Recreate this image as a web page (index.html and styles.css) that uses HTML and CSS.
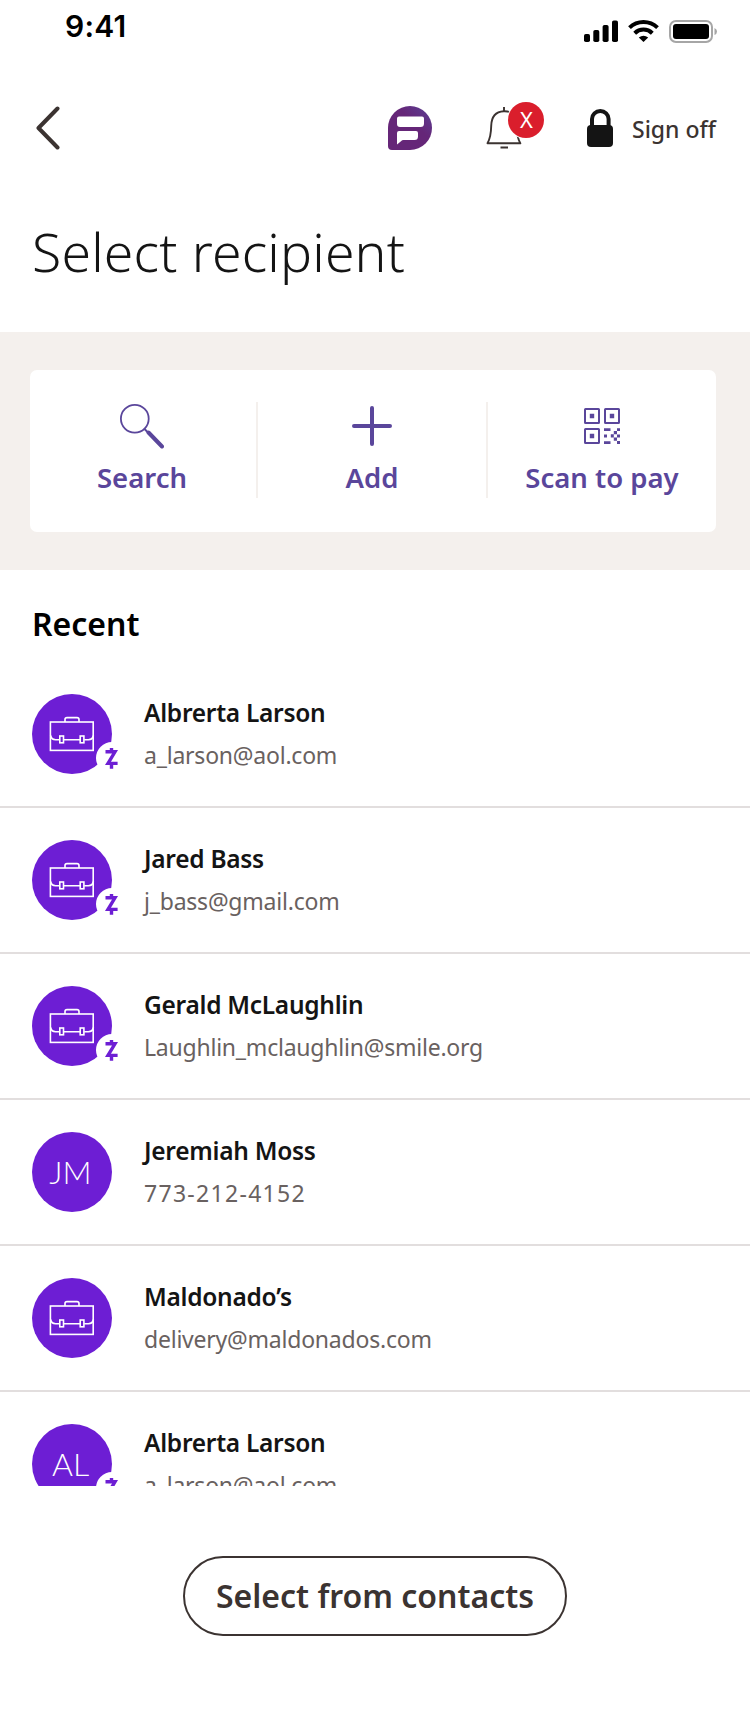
FILE: index.html
```
<!DOCTYPE html>
<html lang="en">
<head>
    <meta charset="UTF-8">
    <meta name="viewport" content="width=device-width, initial-scale=1.0">
    <title>Select recipient</title>
    <link rel="stylesheet" href="styles.css">
</head>
<body>
<!-- shared icons -->
<svg class="defs" width="0" height="0">
    <symbol id="briefcase" viewBox="0 0 80 80">
        <g fill="none" stroke="#fff" stroke-width="1.6">
            <rect x="18.4" y="28" width="42.8" height="28.4"/>
            <path d="M33 28v-2.400q0-2 2-2h10q2 0 2 2v2.400"/>
            <path d="M18.600 41.500q.8 4.200 5 4.200h4M31.500 45.700h16.600M52.200 45.700h4.200q4.200 0 5-4.200"/>
            <rect x="27.800" y="42" width="3.700" height="6.800"/>
            <rect x="48.200" y="42" width="3.700" height="6.800"/>
        </g>
    </symbol>
    <symbol id="zelle" viewBox="0 0 32 32">
        <circle cx="16.500" cy="16" r="16" fill="#fff"/>
        <path d="M16 6v4M16 22v4.700M10 9.800h9.500l-7 11.600h9.600" fill="none" stroke="#6d1ed4" stroke-width="3.400"/>
    </symbol>
</svg>

<div class="status">
    <span class="time">9:41</span>
    <div class="status-icons">
        <svg width="34" height="23"><rect x="0" y="14" width="6" height="8" rx="1.8"/><rect x="9.300" y="10" width="6" height="12" rx="1.800"/><rect x="18.600" y="5" width="6" height="17" rx="1.800"/><rect x="28" y="0.500" width="6" height="21.500" rx="1.800"/></svg>
        <svg width="31" height="23" fill="none" stroke="#000" stroke-width="4"><path d="M1.500 7.600a20.500 20.500 0 0 1 28 0"/><path d="M6.700 13.200a12.600 12.600 0 0 1 17.600 0"/><path d="M15.500 22l-4.700-4.500q4.700-3.300 9.400 0z" fill="#000" stroke="none"/></svg>
        <svg width="48" height="23"><rect x="1" y="1" width="42" height="21" rx="6" fill="none" stroke="#a6a6a6" stroke-width="2"/><rect x="4" y="4" width="36" height="15" rx="3"/><path d="M45.500 8q2.500 1 2.500 3.500t-2.500 3.500z" fill="#a6a6a6"/></svg>
    </div>
</div>

<div class="header">
    <svg class="back" width="24" height="44" fill="none" stroke="#3b3331" stroke-width="4" stroke-linecap="round" stroke-linejoin="round"><path d="M21.500 2.500 2.500 22 21.500 41.500"/></svg>
    <svg class="logo" width="44" height="44">
        <defs><linearGradient id="lg" x1="0" y1="1" x2="1" y2="0"><stop offset=".6" stop-color="#652678"/><stop offset="1" stop-color="#5a4196"/></linearGradient></defs>
        <path d="M0 22A22 22 0 1 1 22 44H4Q0 44 0 40z" fill="url(#lg)"/>
        <path d="M11 10.500H34Q36 10.500 36 12.500V17.500q0 3.500-3.500 3.500H12q-3 0-3-3v-5.500q0-2 2-2zM11 25H28q2 0 2 2v3.500q0 3.500-3.500 3.500h-11q-1.500 0-2.500 1.200L9 38.500V27q0-2 2-2z" fill="#fff"/>
    </svg>
    <svg class="bell" width="58" height="52">
        <g fill="none" stroke="#3b3331" stroke-width="1.900"><path d="M1.500 41.300Q5 35 5.200 24C5.400 14 10 9.600 17.800 9.200S30.400 14 30.600 24Q30.800 35 34.300 41.300z" stroke-linejoin="round"/><path d="M18 5v5M14.500 45.500h7.500"/></g>
        <circle cx="40" cy="18" r="19" fill="#fff"/>
        <circle cx="40" cy="18" r="18" fill="#da1e2c"/>
        <text x="40.500" y="26" text-anchor="middle">X</text>
    </svg>
    <svg class="lock" width="26" height="38"><path d="M5 18V10a8.300 8 0 0 1 16.600 0v8" fill="none" stroke="#141414" stroke-width="4"/><rect y="16" width="26" height="22" rx="4" fill="#141414"/></svg>
    <span class="signoff">Sign off</span>
</div>

<h1>Select recipient</h1>

<div class="band">
    <div class="card">
        <div class="action">
            <svg width="44" height="46" fill="none" stroke="#5a469b"><circle cx="14.800" cy="14.800" r="13.900" stroke-width="1.800"/><path d="M24 24.500l5 5" stroke-width="2"/><path d="M28.500 28.500 42 42.500" stroke-width="4" stroke-linecap="round"/></svg>
            <span>Search</span>
        </div>
        <div class="action add">
            <svg width="44" height="46" stroke="#5a469b" stroke-width="4" stroke-linecap="round"><path d="M4 22H40M22 4V40"/></svg>
            <span>Add</span>
        </div>
        <div class="action">
            <svg width="36" height="46" fill="none" stroke="#5a469b" stroke-width="2">
                <rect x="1" y="5" width="14" height="14" rx=".5"/><rect x="21" y="5" width="14" height="14" rx=".5"/><rect x="1" y="25" width="14" height="14" rx=".5"/>
                <path d="M5.800 9.800h4.400v4.400H5.800zM25.800 9.800h4.400v4.400h-4.400zM5.800 29.800h4.400v4.400H5.800zM20 24.200h6.500v2.800H20zM33 24.200h3V27h-3zM29.800 27H33v3.300h-3.200zM20 30.600h3v2.800h-3zM26.800 30.300h3v3.200h-3zM33 30.600h3v2.800h-3zM29.800 33.500H33v3.300h-3.200zM20 37.200h6.500V40H20zM33 37h3v3h-3z" fill="#5a469b" stroke="none"/>
            </svg>
            <span>Scan to pay</span>
        </div>
    </div>
</div>

<h2>Recent</h2>
<div class="list">
    <div class="row">
        <div class="avatar"><svg width="80" height="80"><use href="#briefcase"/></svg><svg class="badge"><use href="#zelle"/></svg></div>
        <div class="who"><div class="name">Albrerta Larson</div><div class="contact">a_larson@aol.com</div></div>
    </div>
    <div class="row">
        <div class="avatar"><svg width="80" height="80"><use href="#briefcase"/></svg><svg class="badge"><use href="#zelle"/></svg></div>
        <div class="who"><div class="name">Jared Bass</div><div class="contact">j_bass@gmail.com</div></div>
    </div>
    <div class="row">
        <div class="avatar"><svg width="80" height="80"><use href="#briefcase"/></svg><svg class="badge"><use href="#zelle"/></svg></div>
        <div class="who"><div class="name">Gerald McLaughlin</div><div class="contact">Laughlin_mclaughlin@smile.org</div></div>
    </div>
    <div class="row">
        <div class="avatar">JM</div>
        <div class="who"><div class="name">Jeremiah Moss</div><div class="contact phone">773-212-4152</div></div>
    </div>
    <div class="row">
        <div class="avatar"><svg width="80" height="80"><use href="#briefcase"/></svg></div>
        <div class="who"><div class="name">Maldonado’s</div><div class="contact">delivery@maldonados.com</div></div>
    </div>
    <div class="row">
        <div class="avatar">AL<svg class="badge"><use href="#zelle"/></svg></div>
        <div class="who"><div class="name">Albrerta Larson</div><div class="contact">a_larson@aol.com</div></div>
    </div>
</div>

<button class="contacts">Select from contacts</button>
</body>
</html>
```
FILE: styles.css
```
*{box-sizing:border-box;}
body{margin:0;background:#fff;color:#141414;font-family:"Noto Sans",sans-serif;}
svg{display:block;flex:none;}
h1,h2{margin:0;}
.defs{position:absolute;}

.status{display:flex;justify-content:space-between;height:86px;padding:0 33px 0 65px;}
.time{font:600 30px/52px Inter,sans-serif;color:#000;letter-spacing:.2px;}
.status-icons{display:flex;gap:10px;padding-top:20px;}

.header{display:flex;align-items:center;height:84px;padding-left:36px;}
.logo{margin-left:328px;}
.bell{margin-left:54px;}
.bell text{font:400 22px "Noto Sans",sans-serif;fill:#fff;}
.lock{margin-left:43px;}
.signoff{margin-left:19px;padding-top:2px;font-size:23px;font-weight:550;color:#3b3331;white-space:nowrap;}

h1{padding:42px 32px 40px;font-size:53.5px;line-height:80px;font-weight:300;letter-spacing:.2px;}

.band{padding:38px 34px 38px 30px;background:#f4f0ed;}
.card{display:grid;grid-template-columns:228px 230px 228px;height:162px;padding:32px 0 34px;background:#fff;border-radius:7px;}
.action{display:flex;flex-direction:column;align-items:center;padding:2px 2px 0 0;border-right:2px solid #f4f0ed;
font-size:27.5px;line-height:40px;font-weight:570;color:#5a469b;}
.action span{margin-top:8px;}
.add{padding-right:0;}
.action:last-child{border:0;padding-right:0;}

h2{padding:32px 32px 16px;font-size:32px;line-height:44px;font-weight:570;color:#000;}
.list{height:824px;overflow:hidden;}
.row{display:flex;height:146px;padding-left:32px;border-bottom:2px solid #e2dede;}
.avatar{position:relative;width:80px;height:80px;margin-top:32px;padding-right:3px;border-radius:50%;background:#6d1ed4;color:#fff;
font:300 32px/80px Lato,sans-serif;text-align:center;}
.badge{position:absolute;left:63px;top:48px;width:33px;height:32px;}
.who{padding:30px 0 0 32px;}
.name{font-size:24.5px;line-height:42px;font-weight:570;letter-spacing:-.28px;}
.contact{font-size:23px;line-height:42px;color:#696160;letter-spacing:-.22px;}
.phone{letter-spacing:1.3px;}

.contacts{display:block;width:384px;height:80px;margin:70px auto 0;padding:0 0 2px;border:2px solid #3b3331;border-radius:40px;
background:#fff;color:#3b3331;font:570 32px "Noto Sans",sans-serif;}
```
